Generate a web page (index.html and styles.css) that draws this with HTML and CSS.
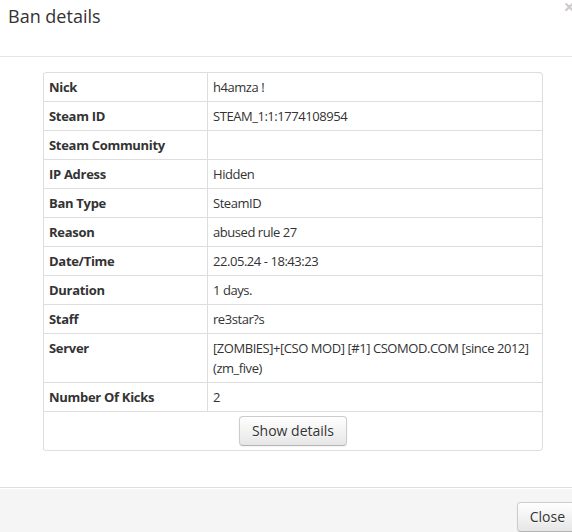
FILE: index.html
```html
<!DOCTYPE HTML>
<html>
    <head>
        <meta charset="UTF-8">
        <title>Ban details</title>
        <link rel="stylesheet" href="styles.css">
    </head>
    <body>
        <div class="modal">
            <div class="modal-header">
                <h3>Ban details</h3>
                <button class="close" type="button">&times;</button>
            </div>
            <div class="modal-body">
                <table class="details">
                    <tr>
                        <td class="label">Nick</td>
                        <td>h4amza !</td>
                    </tr>
                    <tr>
                        <td class="label">Steam ID</td>
                        <td>STEAM_1:1:1774108954</td>
                    </tr>
                    <tr>
                        <td class="label">Steam Community</td>
                        <td></td>
                    </tr>
                    <tr>
                        <td class="label">IP Adress</td>
                        <td>Hidden</td>
                    </tr>
                    <tr>
                        <td class="label">Ban Type</td>
                        <td>SteamID</td>
                    </tr>
                    <tr>
                        <td class="label">Reason</td>
                        <td>abused rule 27</td>
                    </tr>
                    <tr>
                        <td class="label">Date/Time</td>
                        <td>22.05.24 - 18:43:23</td>
                    </tr>
                    <tr>
                        <td class="label">Duration</td>
                        <td>1 days.</td>
                    </tr>
                    <tr>
                        <td class="label">Staff</td>
                        <td>re3star?s</td>
                    </tr>
                    <tr>
                        <td class="label">Server</td>
                        <td>[ZOMBIES]+[CSO MOD] [#1] CSOMOD.COM [since 2012] (zm_five)</td>
                    </tr>
                    <tr>
                        <td class="label">Number Of Kicks</td>
                        <td>2</td>
                    </tr>
                    <tr>
                        <td class="actions" colspan="2">
                            <button class="btn" type="button">Show details</button>
                        </td>
                    </tr>
                </table>
            </div>
            <div class="modal-footer">
                <button class="btn" type="button">Close</button>
            </div>
        </div>
    </body>
</html>
```

FILE: styles.css
```css
body{
    margin: 0;
    overflow: hidden;
    background: #fff;
    font-family: "Open Sans", "Liberation Sans", sans-serif;
    font-size: 13px;
    line-height: 20px;
    color: #333;
}
.modal{
    width: 600px;
    margin-left: -7px;
}
.modal-header{
    display: flex;
    justify-content: space-between;
    align-items: flex-start;
    height: 57px;
    padding: 0 18px 0 15px;
    box-sizing: border-box;
    border-bottom: 1px solid #e5e5e5;
}
.modal-header h3{
    margin: 1px 0 0;
    font-size: 18px;
    font-weight: 500;
    line-height: 30px;
    color: #333;
}
.close{
    margin: 0;
    padding: 0;
    border: 0;
    background: none;
    font-family: inherit;
    font-size: 20px;
    font-weight: bold;
    line-height: 14px;
    color: #000;
    opacity: .2;
}
.modal-body{
    padding: 15px 15px 16px;
}
.details{
    width: 500px;
    margin: 0 auto 20px;
    border-collapse: separate;
    border-spacing: 0;
    border: 1px solid #ddd;
    border-left: 0;
    border-radius: 4px;
    table-layout: fixed;
}
.details td{
    padding: 4px 5px;
    vertical-align: top;
    text-align: left;
    letter-spacing: -0.45px;
    border-top: 1px solid #ddd;
    border-left: 1px solid #ddd;
}
.details tr:first-child td{
    border-top: 0;
}
.details td.label{
    width: 153px;
    font-weight: bold;
    letter-spacing: -0.3px;
}
.details td.actions{
    padding: 4px;
    text-align: center;
    letter-spacing: normal;
}
.btn{
    display: inline-block;
    padding: 4px 12px;
    font-family: inherit;
    font-size: 14px;
    line-height: 20px;
    color: #333;
    text-shadow: 0 1px 1px rgba(255, 255, 255, .75);
    background: linear-gradient(#fff, #e6e6e6);
    border: 1px solid #ccc;
    border-bottom-color: #b3b3b3;
    border-radius: 4px;
    box-shadow: inset 0 1px 0 rgba(255, 255, 255, .2), 0 1px 2px rgba(0, 0, 0, .05);
    cursor: pointer;
}
.modal-footer{
    padding: 14px 15px 15px;
    text-align: right;
    background: #f5f5f5;
    border-top: 1px solid #ddd;
    box-shadow: inset 0 1px 0 #fff;
}
```
